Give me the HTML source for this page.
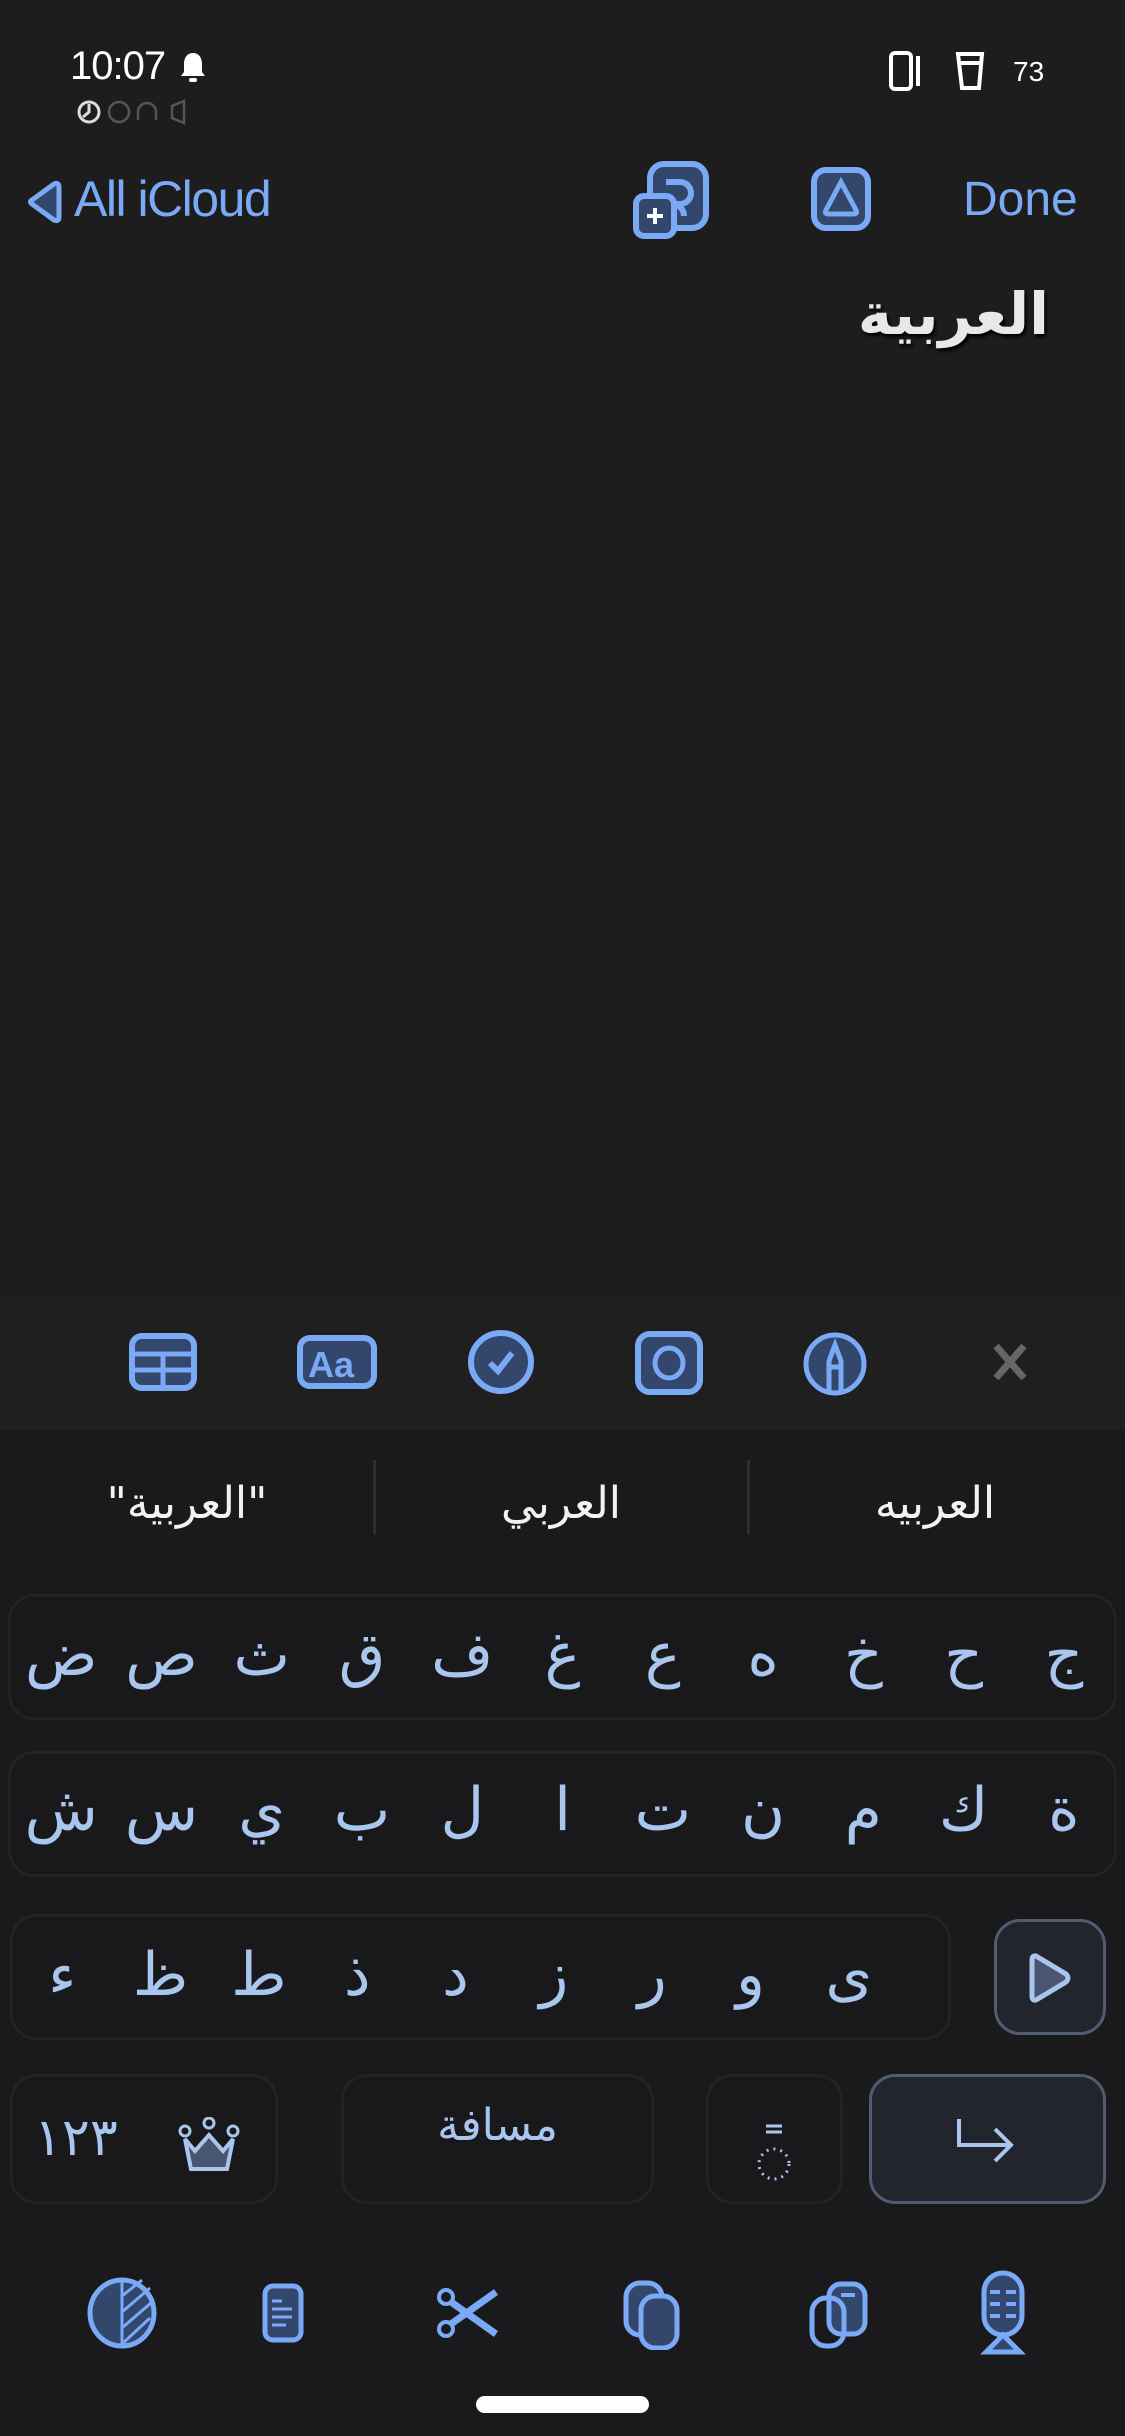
<!DOCTYPE html>
<html><head><meta charset="utf-8"><style>
*{margin:0;padding:0;box-sizing:border-box}
body{width:1125px;height:2436px;background:#1a1a1d;position:relative;overflow:hidden;font-family:"Liberation Sans","Noto Sans CJK SC",sans-serif}
.abs{position:absolute}
.notes{left:0;top:0;width:1125px;height:1295px;background:#1d1d1d}
.tb{left:0;top:1295px;width:1125px;height:135px;background:#1f1f20}
.row{position:absolute;display:flex;flex-direction:row-reverse;border:3px solid #232327;border-radius:26px;background:#19191c}
.row span{flex:1;text-align:center;color:#a9c6ee;font-size:60px;font-family:"DejaVu Sans","Noto Sans CJK SC",sans-serif;line-height:1}
.key{position:absolute;border:3px solid #232327;border-radius:26px;background:#19191c}
.sug{position:absolute;top:1478px;color:#f2f2f2;font-size:44px;font-family:"DejaVu Sans",sans-serif;text-align:center;width:374px}
.sep{position:absolute;top:1460px;width:3px;height:74px;background:#2e2e32}
</style></head><body>
<div class="abs notes"></div>
<div class="abs" style="left:70px;top:44px;color:#fff;font-size:40px;letter-spacing:-1px">10:07</div>
<svg class="abs" style="left:178px;top:50px" width="30" height="34" viewBox="0 0 30 34"><path d="M15 3c-6 0-9 5-9 11v8l-3 4h24l-3-4v-8c0-6-3-11-9-11z" fill="#fff"/><rect x="11" y="28" width="8" height="4" rx="2" fill="#fff"/></svg>
<svg class="abs" style="left:76px;top:98px" width="120" height="28" viewBox="0 0 120 28"><circle cx="13" cy="14" r="10" fill="none" stroke="#ddd" stroke-width="3"/><path d="M13 6v8l-6 5" stroke="#ddd" stroke-width="3" fill="none"/><circle cx="43" cy="14" r="10" fill="none" stroke="#555" stroke-width="2.5"/><path d="M62 22v-8a9 9 0 0 1 18 0v8" fill="none" stroke="#555" stroke-width="2.5"/><path d="M96 8v12l12 5V3z" fill="none" stroke="#555" stroke-width="2.5"/></svg>
<svg class="abs" style="left:888px;top:50px" width="36" height="42" viewBox="0 0 36 42"><rect x="3" y="3" width="20" height="36" rx="4" fill="none" stroke="#fff" stroke-width="4"/><path d="M30 6v30" stroke="#fff" stroke-width="4"/></svg>
<svg class="abs" style="left:954px;top:50px" width="32" height="42" viewBox="0 0 32 42"><path d="M4 4h24l-3 34H8z" fill="none" stroke="#fff" stroke-width="4"/><path d="M6 13h21" stroke="#fff" stroke-width="4"/></svg>
<div class="abs" style="left:1013px;top:56px;color:#fff;font-size:28px">73</div>

<svg class="abs" style="left:24px;top:178px" width="40" height="48" viewBox="0 0 40 48"><path d="M30 6L8 22q-3 2 0 4l22 16q5 2 5-3V9q0-5-5-3z" fill="#33466b" stroke="#7aa9f5" stroke-width="5"/></svg>
<div class="abs" style="left:74px;top:170px;color:#7aa9f5;font-size:50px;letter-spacing:-1.5px">All iCloud</div>
<svg class="abs" style="left:632px;top:160px" width="80" height="80" viewBox="0 0 80 80"><rect x="18" y="4" width="56" height="64" rx="14" fill="#33466b" stroke="#7aa9f5" stroke-width="6"/><path d="M34 22h14a10 10 0 0 1 0 22h-8M40 44a12 12 0 0 1 12 12" fill="none" stroke="#7aa9f5" stroke-width="6"/><rect x="4" y="36" width="38" height="40" rx="8" fill="#33466b" stroke="#7aa9f5" stroke-width="6"/><path d="M23 48v16M15 56h16" stroke="#fff" stroke-width="4"/></svg>
<svg class="abs" style="left:810px;top:166px" width="62" height="66" viewBox="0 0 62 66"><rect x="4" y="4" width="54" height="58" rx="12" fill="#33466b" stroke="#7aa9f5" stroke-width="6"/><path d="M31 16L16 44q-2 4 3 4h24q5 0 3-4z" fill="none" stroke="#7aa9f5" stroke-width="5"/></svg>
<div class="abs" style="left:963px;top:172px;color:#7aa9f5;font-size:48px">Done</div>
<div class="abs" style="right:76px;top:280px;color:#e8e8e8;font-size:58px;font-weight:bold;font-family:'DejaVu Sans',sans-serif;text-shadow:2px 3px 3px #000">العربية</div>

<div class="abs tb"></div>
<svg class="abs" style="left:128px;top:1332px" width="70" height="60" viewBox="0 0 70 60"><rect x="4" y="4" width="62" height="52" rx="10" fill="#33466b" stroke="#7aa9f5" stroke-width="6"/><path d="M4 22h62M4 38h62M35 22v34" stroke="#7aa9f5" stroke-width="5"/></svg>
<svg class="abs" style="left:296px;top:1334px" width="82" height="56" viewBox="0 0 82 56"><rect x="4" y="4" width="74" height="48" rx="10" fill="#33466b" stroke="#7aa9f5" stroke-width="6"/><text x="12" y="43" font-size="36" fill="#7aa9f5" font-family="Liberation Sans" font-weight="bold">Aa</text></svg>
<svg class="abs" style="left:466px;top:1329px" width="70" height="66" viewBox="0 0 70 66"><ellipse cx="35" cy="33" rx="30" ry="29" fill="#33466b" stroke="#7aa9f5" stroke-width="6"/><path d="M24 34l8 8 14-18" fill="none" stroke="#7aa9f5" stroke-width="6"/></svg>
<svg class="abs" style="left:634px;top:1330px" width="70" height="66" viewBox="0 0 70 66"><rect x="4" y="4" width="62" height="58" rx="12" fill="#33466b" stroke="#7aa9f5" stroke-width="6"/><ellipse cx="35" cy="33" rx="14" ry="15" fill="none" stroke="#7aa9f5" stroke-width="5"/></svg>
<svg class="abs" style="left:802px;top:1331px" width="66" height="66" viewBox="0 0 66 66"><ellipse cx="33" cy="33" rx="29" ry="29" fill="#33466b" stroke="#7aa9f5" stroke-width="5"/><path d="M27 62V30l6-16 6 16v32M27 36h12" fill="none" stroke="#7aa9f5" stroke-width="5"/></svg>
<svg class="abs" style="left:990px;top:1342px" width="40" height="40" viewBox="0 0 40 40"><path d="M6 4l28 32M34 4L6 36" stroke="#666" stroke-width="7"/></svg>

<div class="sug" style="left:0">"العربية"</div>
<div class="sep" style="left:373px"></div>
<div class="sug" style="left:374px">العربي</div>
<div class="sep" style="left:747px"></div>
<div class="sug" style="left:748px">العربيه</div>

<div class="row" style="left:8px;top:1594px;width:1109px;height:126px;padding-top:28px"><span>ج</span><span>ح</span><span>خ</span><span>ه</span><span>ع</span><span>غ</span><span>ف</span><span>ق</span><span>ث</span><span>ص</span><span>ض</span></div>
<div class="row" style="left:8px;top:1751px;width:1109px;height:126px;padding-top:26px"><span>ة</span><span>ك</span><span>م</span><span>ن</span><span>ت</span><span>ا</span><span>ل</span><span>ب</span><span>ي</span><span>س</span><span>ش</span></div>
<div class="row" style="left:10px;top:1914px;width:941px;height:126px;padding:28px 50px 0 0"><span>ى</span><span>و</span><span>ر</span><span>ز</span><span>د</span><span>ذ</span><span>ط</span><span>ظ</span><span>ء</span></div>
<div class="key" style="left:994px;top:1919px;width:112px;height:116px;background:#22252d;border-color:#525c70"></div>
<svg class="abs" style="left:1028px;top:1950px" width="46" height="56" viewBox="0 0 46 56"><path d="M8 6l30 18q4 4 0 8L8 50q-4 1-4-4V10q0-5 4-4z" fill="#4a5670" stroke="#a9c6ee" stroke-width="5"/></svg>

<div class="key" style="left:10px;top:2074px;width:268px;height:130px"></div>
<div class="abs" style="left:34px;top:2108px;color:#a9c6ee;font-size:52px;font-family:'DejaVu Sans',sans-serif">١٢٣</div>
<svg class="abs" style="left:175px;top:2117px" width="68" height="56" viewBox="0 0 68 56"><circle cx="10" cy="14" r="5" fill="none" stroke="#a9c6ee" stroke-width="3"/><circle cx="34" cy="6" r="5" fill="none" stroke="#a9c6ee" stroke-width="3"/><circle cx="58" cy="14" r="5" fill="none" stroke="#a9c6ee" stroke-width="3"/><path d="M10 22l10 12 14-16 14 16 10-12-6 30H16z" fill="#4a5670" stroke="#a9c6ee" stroke-width="4"/></svg>
<div class="key" style="left:341px;top:2074px;width:313px;height:130px"></div>
<div class="abs" style="left:341px;top:2100px;width:313px;text-align:center;color:#a9c6ee;font-size:44px;font-family:'DejaVu Sans',sans-serif">مسافة</div>
<div class="key" style="left:706px;top:2074px;width:137px;height:130px"></div>
<svg class="abs" style="left:752px;top:2120px" width="44" height="66" viewBox="0 0 44 66"><path d="M14 6h16M14 12h16" stroke="#a9c6ee" stroke-width="3"/><circle cx="22" cy="44" r="15" fill="none" stroke="#a9c6ee" stroke-width="3" stroke-dasharray="2 5"/></svg>
<div class="key" style="left:869px;top:2074px;width:237px;height:130px;background:#22252d;border-color:#525c70"></div>
<svg class="abs" style="left:955px;top:2115px" width="62" height="50" viewBox="0 0 62 50"><path d="M4 4v26h50M40 14l16 16-16 16" fill="none" stroke="#a9c6ee" stroke-width="4"/></svg>

<svg class="abs" style="left:86px;top:2276px" width="72" height="74" viewBox="0 0 72 74"><ellipse cx="36" cy="37" rx="32" ry="33" fill="#33466b" stroke="#7aa9f5" stroke-width="5"/><path d="M36 4v66M36 20l20-16M36 36l28-24M36 52l30-26M36 68l28-26" stroke="#7aa9f5" stroke-width="3"/></svg>
<svg class="abs" style="left:262px;top:2283px" width="42" height="60" viewBox="0 0 42 60"><rect x="3" y="3" width="36" height="54" rx="8" fill="#33466b" stroke="#7aa9f5" stroke-width="5"/><path d="M10 18h10M10 26h20M10 34h20M10 42h14" stroke="#7aa9f5" stroke-width="3"/></svg>
<svg class="abs" style="left:436px;top:2287px" width="66" height="52" viewBox="0 0 66 52"><circle cx="10" cy="10" r="7" fill="none" stroke="#7aa9f5" stroke-width="4"/><circle cx="10" cy="42" r="7" fill="none" stroke="#7aa9f5" stroke-width="4"/><path d="M15 15l45 32M15 37L60 5" stroke="#7aa9f5" stroke-width="7"/></svg>
<svg class="abs" style="left:623px;top:2280px" width="60" height="70" viewBox="0 0 60 70"><rect x="3" y="3" width="36" height="52" rx="14" fill="#33466b" stroke="#7aa9f5" stroke-width="5"/><rect x="18" y="16" width="36" height="52" rx="14" fill="#33466b" stroke="#7aa9f5" stroke-width="5"/></svg>
<svg class="abs" style="left:809px;top:2281px" width="60" height="68" viewBox="0 0 60 68"><rect x="20" y="3" width="36" height="50" rx="12" fill="#33466b" stroke="#7aa9f5" stroke-width="5"/><path d="M32 14h14" stroke="#7aa9f5" stroke-width="4"/><rect x="3" y="17" width="32" height="48" rx="14" fill="none" stroke="#7aa9f5" stroke-width="5"/></svg>
<svg class="abs" style="left:980px;top:2270px" width="46" height="86" viewBox="0 0 46 86"><rect x="4" y="3" width="38" height="62" rx="19" fill="#33466b" stroke="#7aa9f5" stroke-width="5"/><path d="M10 22h10M26 22h10M10 34h10M26 34h10M10 46h10M26 46h10" stroke="#7aa9f5" stroke-width="4"/><path d="M23 65L6 82h34z" fill="#33466b" stroke="#7aa9f5" stroke-width="5"/></svg>
<div class="abs" style="left:476px;top:2396px;width:173px;height:17px;border-radius:9px;background:#fff"></div>
</body></html>
